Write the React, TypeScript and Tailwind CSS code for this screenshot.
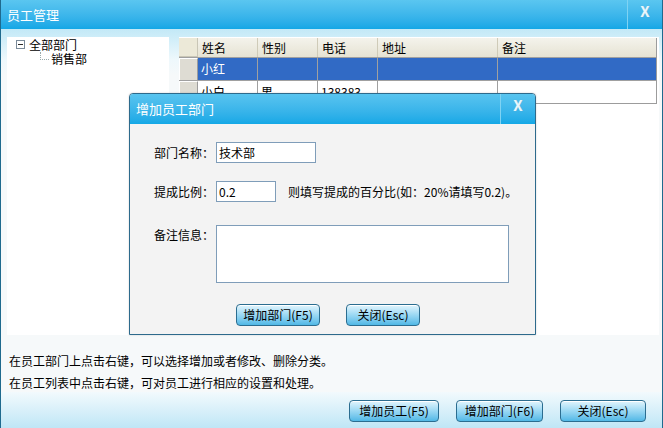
import React from 'react';

const font = { fontFamily: '"Noto Sans CJK SC", "Liberation Sans", sans-serif' };

const columns = [
  { name: '姓名', w: 'w-[60px]' },
  { name: '性别', w: 'w-[60px]' },
  { name: '电话', w: 'w-[60px]' },
  { name: '地址', w: 'w-[120px]' },
  { name: '备注', w: 'flex-1' },
];

const rows = [
  { cells: ['小红', '', '', '', ''], selected: true },
  { cells: ['小白', '男', '138383', '', ''], selected: false },
];

const BlueButton: React.FC<{ label: string; w: string }> = ({ label, w }) => (
  <button
    className={`${w} h-[22px] rounded-[4px] border border-[#2b6d90] bg-gradient-to-b from-[#e2f5fd] via-[#9ad8f3] to-[#4fb8e6] text-[12px] leading-none text-black shadow-[inset_0_1px_0_#ffffff]`}
  >
    {label}
  </button>
);

const CloseX: React.FC = () => (
  <span className="text-[15px] font-bold leading-none text-[#e8f6fc] [text-shadow:0_0_1px_#6fa9c7]">X</span>
);

export default function App() {
  return (
    <div
      className="relative flex h-[428px] w-[663px] flex-col overflow-hidden border-x border-[#1f6a8e] bg-[#f6f9fa] text-[12px] text-black"
      style={font}
    >
      {/* title bar */}
      <div className="flex h-[29px] shrink-0 items-center bg-gradient-to-b from-[#5ac6f0] to-[#12a7e6]">
        <span className="flex-1 pl-[6px] text-[13px] text-white">员工管理</span>
        <div className="flex h-full w-[35px] items-start justify-center border-l border-[#7fd3f3] pt-[3px]">
          <CloseX />
        </div>
      </div>

      {/* body */}
      <div className="flex h-[306px] shrink-0 bg-gradient-to-b from-[#c2e9f7] via-[#eef8fc] via-[10%] to-[#f6f9fa] to-[15%] pt-[8px] pr-[3px] pl-[6px]">
        {/* tree */}
        <div className="flex h-[298px] w-[162px] flex-col gap-[1px] bg-white pt-[1px] pl-[9px] leading-[12px]">
          <div className="flex h-[13px] items-center gap-[4px]">
            <span className="flex h-[9px] w-[9px] items-center justify-center border border-[#7a8a99] bg-white">
              <span className="h-px w-[5px] bg-[#2a2a2a]" />
            </span>
            <span>全部部门</span>
          </div>
          <div className="flex h-[13px] items-center">
            <span className="ml-[24px] mr-[2px] h-[8px] w-[9px] -translate-y-[3px] border-b border-l border-dotted border-[#9aa]" />
            <span>销售部</span>
          </div>
        </div>

        <div className="w-[10px]" />

        {/* list panel */}
        <div className="h-[298px] flex-1 bg-white pt-px pr-[2px]">
          <div className="flex flex-col border border-[#9c9c9c] border-t-0 border-l-0">
            {/* header */}
            <div className="flex h-[19px] bg-gradient-to-b from-[#f4f3ec] to-[#e6e3d3]">
              <div className="w-[19px] border-r border-b border-[#c9c6b6] bg-[#ece9d8]" />
              {columns.map((c) => (
                <div key={c.name} className={`${c.w} flex items-center border-r border-[#cfcbb8] pl-[4px] last:border-r-0`}>
                  {c.name}
                </div>
              ))}
            </div>
            {rows.map((r, i) => (
              <div key={i} className="flex h-[23px] border-t border-[#a0a0a0]">
                <div className="w-[19px] border-t border-l border-white border-r border-r-[#9c9c9c] bg-[#dedcd3]" />
                {r.cells.map((cell, j) => (
                  <div
                    key={j}
                    className={`${columns[j].w} flex items-center overflow-hidden border-r border-[#a0a0a0] pl-[3px] last:border-r-0 ${
                      r.selected ? 'bg-[#316ac5] text-white' : 'bg-white'
                    }`}
                  >
                    {cell}
                  </div>
                ))}
              </div>
            ))}
          </div>
        </div>
      </div>

      {/* hints */}
      <div className="flex flex-col gap-[8px] pt-[19px] pl-[8px] leading-[14px]">
        <p>在员工部门上点击右键，可以选择增加或者修改、删除分类。</p>
        <p>在员工列表中点击右键，可对员工进行相应的设置和处理。</p>
      </div>

      {/* bottom bar */}
      <div className="mt-auto flex h-[36px] items-center justify-end gap-[17px] bg-gradient-to-b from-[#f2fafd] to-[#bfe6f6] pr-[16px] pt-[2px]">
        <BlueButton label="增加员工(F5)" w="w-[90px]" />
        <BlueButton label="增加部门(F6)" w="w-[87px]" />
        <BlueButton label="关闭(Esc)" w="w-[86px]" />
      </div>

      {/* dialog */}
      <div className="absolute top-[93px] left-[128px] flex h-[242px] w-[407px] flex-col overflow-hidden rounded-t-[4px] border border-[#2d6a8c] bg-[#f3f3f3] shadow-[0_0_2px_rgba(0,0,0,0.2)]">
        <div className="flex h-[30px] shrink-0 items-center bg-gradient-to-b from-[#58c4ef] to-[#13a8e6]">
          <span className="flex-1 pl-[6px] text-[13px] text-white">增加员工部门</span>
          <div className="flex h-full w-[35px] items-start justify-center border-l border-[#7fd3f3] pt-[3px]">
            <CloseX />
          </div>
        </div>
        <div className="flex flex-col pt-[18px] pl-[24px]">
          <div className="flex items-center">
            <span className="w-[62px]">部门名称：</span>
            <div className="flex h-[21px] w-[100px] items-center border border-[#7f9db9] bg-white pl-[2px]">技术部</div>
          </div>
          <div className="mt-[18px] flex items-center">
            <span className="w-[62px]">提成比例：</span>
            <div className="flex h-[21px] w-[60px] items-center border border-[#7f9db9] bg-white pl-[2px]">0.2</div>
            <span className="ml-[12px]">则填写提成的百分比(如：20%请填写0.2)。</span>
          </div>
          <div className="mt-[23px] flex items-start">
            <span className="w-[62px] pt-[1px]">备注信息：</span>
            <div className="h-[58px] w-[293px] border border-[#7f9db9] bg-white" />
          </div>
          <div className="mt-[21px] flex gap-[26px] pl-[82px]">
            <BlueButton label="增加部门(F5)" w="w-[84px]" />
            <BlueButton label="关闭(Esc)" w="w-[74px]" />
          </div>
        </div>
      </div>
    </div>
  );
}
